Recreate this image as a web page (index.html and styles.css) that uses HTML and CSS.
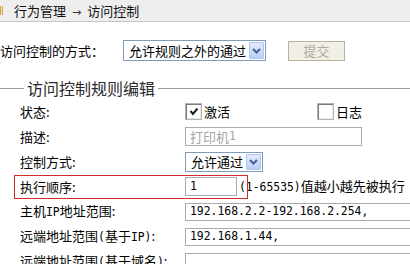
FILE: index.html
```html
<!DOCTYPE html>
<html lang="zh-CN">
<head>
<meta charset="utf-8">
<title>访问控制</title>
<link rel="stylesheet" href="styles.css">
</head>
<body>
<div class="topbar"><span class="mark"></span><span class="crumb">行为管理<span class="arrow">→</span>访问控制</span></div>

<div class="mode-row">
  <span class="mode-label">访问控制的方式：</span>
  <div class="select select-wide"><span class="select-text">允许规则之外的通过</span><span class="select-btn"><svg width="9" height="6" viewBox="0 0 9 6"><path d="M1 1 L4.5 4.5 L8 1" fill="none" stroke="#4a5f8a" stroke-width="2"/></svg></span></div>
  <button class="submit" disabled>提交</button>
</div>

<fieldset class="rules">
  <legend>访问控制规则编辑</legend>
  <div class="row">
    <span class="label">状态:</span>
    <span class="check-item first"><span class="check"><svg width="10" height="9" viewBox="0 0 10 9"><path d="M1.5 4 L4 7 L8.5 1.5" fill="none" stroke="#1e1e1e" stroke-width="2"/></svg></span><span>激活</span></span>
    <span class="check-item"><span class="check"></span><span>日志</span></span>
  </div>
  <div class="row">
    <span class="label">描述:</span>
    <span class="input desc">打印机<span class="mono">1</span></span>
  </div>
  <div class="row">
    <span class="label">控制方式:</span>
    <div class="select select-small"><span class="select-text">允许通过</span><span class="select-btn"><svg width="9" height="6" viewBox="0 0 9 6"><path d="M1 1 L4.5 4.5 L8 1" fill="none" stroke="#4a5f8a" stroke-width="2"/></svg></span></div>
  </div>
  <div class="row">
    <span class="label">执行顺序:</span>
    <span class="input order"><span class="mono">1</span></span>
    <span class="hint"><span class="mono">(1-65535)</span>值越小越先被执行</span>
  </div>
  <div class="row">
    <span class="label">主机<span class="mono">IP</span>地址范围:</span>
    <span class="input wide"><span class="mono">192.168.2.2-192.168.2.254,</span></span>
  </div>
  <div class="row">
    <span class="label">远端地址范围<span class="mono">(</span>基于<span class="mono">IP)</span>:</span>
    <span class="input wide"><span class="mono">192.168.1.44,</span></span>
  </div>
  <div class="row">
    <span class="label">远端地址范围<span class="mono">(</span>基于域名<span class="mono">)</span>:</span>
    <span class="input wide"></span>
  </div>
</fieldset>

<div class="highlight"></div>
</body>
</html>
```

FILE: styles.css
```css
* { box-sizing: border-box; }

html, body {
  margin: 0;
  padding: 0;
}

body {
  width: 410px;
  height: 264px;
  overflow: hidden;
  background: #fff;
  color: #000;
  font-family: "Noto Sans CJK SC", sans-serif;
  font-size: 13px;
  line-height: 1;
}

.mono {
  font-family: "DejaVu Sans Mono", "Liberation Mono", monospace;
  font-size: 11.4px;
}

.topbar {
  height: 22px;
  background: #eeeeee;
  border-bottom: 1px solid #c6c6c6;
  display: flex;
  align-items: center;
}

.mark {
  width: 3px;
  height: 9px;
  margin-right: 11px;
  background: linear-gradient(90deg, #d7a548 0 1px, #f3e2b8 1px 2px, #d7a548 2px 3px);
}

.crumb { color: #111; }
.arrow {
  font-family: "DejaVu Sans", sans-serif;
  font-size: 11px;
  color: #333;
  margin: 0 6px;
}

.mode-row {
  display: flex;
  align-items: center;
  height: 21px;
  margin-top: 18px;
}

.mode-label { width: 123px; flex: none; }

.select {
  display: flex;
  align-items: stretch;
  background: #fff;
  border: 1px solid #7f9db9;
  flex: none;
}

.select-wide { width: 143px; height: 21px; }
.select-small { width: 78px; height: 20px; }

.select-text {
  flex: 1;
  display: flex;
  align-items: center;
  padding-left: 5px;
  white-space: nowrap;
  overflow: hidden;
}

.select-btn {
  width: 15px;
  margin: 1px;
  display: flex;
  align-items: center;
  justify-content: center;
  background: linear-gradient(#e2ebfe, #b9cdf8);
  border: 1px solid #b2c5f2;
  border-radius: 1px;
}

.submit {
  margin-left: 22px;
  width: 57px;
  height: 20px;
  padding: 0;
  background: #f1efe6;
  border: 1px solid #b6b39f;
  color: #aeab9c;
  font: inherit;
}

.rules {
  margin: 17px 0 0 0;
  padding: 1px 0 0 20px;
  border: 0;
  border-top: 1px solid #9c9c9c;
  min-width: 0;
}

.rules legend {
  margin-left: 4px;
  padding: 0 3px;
  font-size: 16px;
  line-height: 20px;
  color: #2a2a2a;
}

.row {
  display: flex;
  align-items: center;
  height: 25px;
  white-space: nowrap;
}

.label { width: 165px; flex: none; }

.check-item {
  display: flex;
  align-items: center;
  gap: 2px;
}

.check-item.first { width: 132px; }

.check {
  width: 17px;
  height: 17px;
  border: 1px solid #b4b4b4;
  background: #fff;
  box-shadow: inset 1px 1px 0 #7a7a7a, inset -1px -1px 0 #e8e8e8;
  display: flex;
  align-items: center;
  justify-content: center;
}

.input {
  display: flex;
  align-items: center;
  padding-left: 4px;
  background: #fff;
  border: 1px solid #a5acb2;
  flex: none;
}

.desc { width: 177px; height: 19px; color: #a4a4a4; }
.order { width: 52px; height: 19px; }
.hint { margin-left: 2px; }
.wide { width: 240px; height: 18px; }

.highlight {
  position: absolute;
  left: 14px;
  top: 175px;
  width: 234px;
  height: 24px;
  border: 1px solid #cf2b2b;
  pointer-events: none;
}
```
